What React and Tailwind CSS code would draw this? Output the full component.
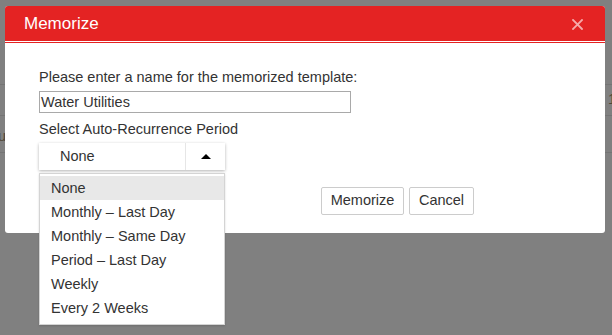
import React from 'react';

const options = [
  'None',
  'Monthly \u2013 Last Day',
  'Monthly \u2013 Same Day',
  'Period \u2013 Last Day',
  'Weekly',
  'Every 2 Weeks',
];

const App = () => {
  return (
    <div className="relative w-[612px] h-[335px] overflow-hidden bg-[#808080] font-['Liberation_Sans',Arial,sans-serif] text-[14.5px] text-[#333]">
      {/* page behind the overlay */}
      <div className="pt-[84px] text-[#4f4636]">
        <div className="h-[31px] border-t border-[#747474] flex justify-end items-center">
          <span className="mr-[-4px]">1</span>
        </div>
        <div className="h-[37px] border-t border-[#747474] flex items-center">
          <span className="ml-[-2px] mt-[6px]">u</span>
        </div>
        <div className="h-[37px] border-t border-[#747474]" />
      </div>

      {/* modal */}
      <div className="absolute left-[5px] top-[6px] w-[600px] bg-white rounded-[3px]">
        <div className="h-[35px] bg-[#e42323] rounded-t-[3px] flex items-center justify-between pl-[19px] pr-[22px]">
          <span className="text-white text-[17px] leading-[35px]">Memorize</span>
          <svg width="11" height="11" viewBox="0 0 11 11" className="mt-[1px]">
            <path d="M1 1L10 10M10 1L1 10" stroke="#f6a9a9" strokeWidth="1.8" strokeLinecap="square" />
          </svg>
        </div>
        <div className="h-[1px] bg-white" />
        <div className="h-[1px] bg-[#e42323]" />

        <div className="pl-[34px] pt-[24px] pb-[18px]">
          <div className="leading-[20px]">Please enter a name for the memorized template:</div>
          <div className="mt-[4px] w-[312px] h-[22px] border border-[#a9a9a9] pl-[1px] leading-[20px]">
            Water Utilities
          </div>
          <div className="mt-[6px] leading-[20px]">Select Auto-Recurrence Period</div>

          <div className="relative mt-[4px] w-[186px]">
            <div className="h-[27px] flex bg-white shadow-[0_1px_3px_rgba(0,0,0,0.3)]">
              <div className="flex-1 flex items-center pl-[21px]">None</div>
              <div className="w-[40px] border-l border-[#e6e6e6] flex items-center justify-center">
                <svg width="10" height="5" viewBox="0 0 10 5">
                  <path d="M0 5L5 0L10 5Z" fill="#000" />
                </svg>
              </div>
            </div>
            <div className="absolute left-0 top-[30px] w-[186px] bg-white border border-[#d4d4d4] shadow-[0_1px_2px_rgba(0,0,0,0.15)] pt-[2px] pb-[4px] z-10">
              {options.map((o, i) => (
                <div
                  key={o}
                  className={`h-[24px] leading-[24px] pl-[11px] ${i === 0 ? 'bg-[#e8e8e8]' : ''}`}
                >
                  {o}
                </div>
              ))}
            </div>
          </div>

          <div className="mt-[17px] flex justify-end gap-[5px] pr-[131px]">
            <button className="h-[28px] w-[83px] border border-[#cccccc] rounded-[2px] bg-white text-[#333]">
              Memorize
            </button>
            <button className="h-[28px] w-[65px] border border-[#cccccc] rounded-[2px] bg-white text-[#333]">
              Cancel
            </button>
          </div>
        </div>
      </div>
    </div>
  );
};

export default App;
